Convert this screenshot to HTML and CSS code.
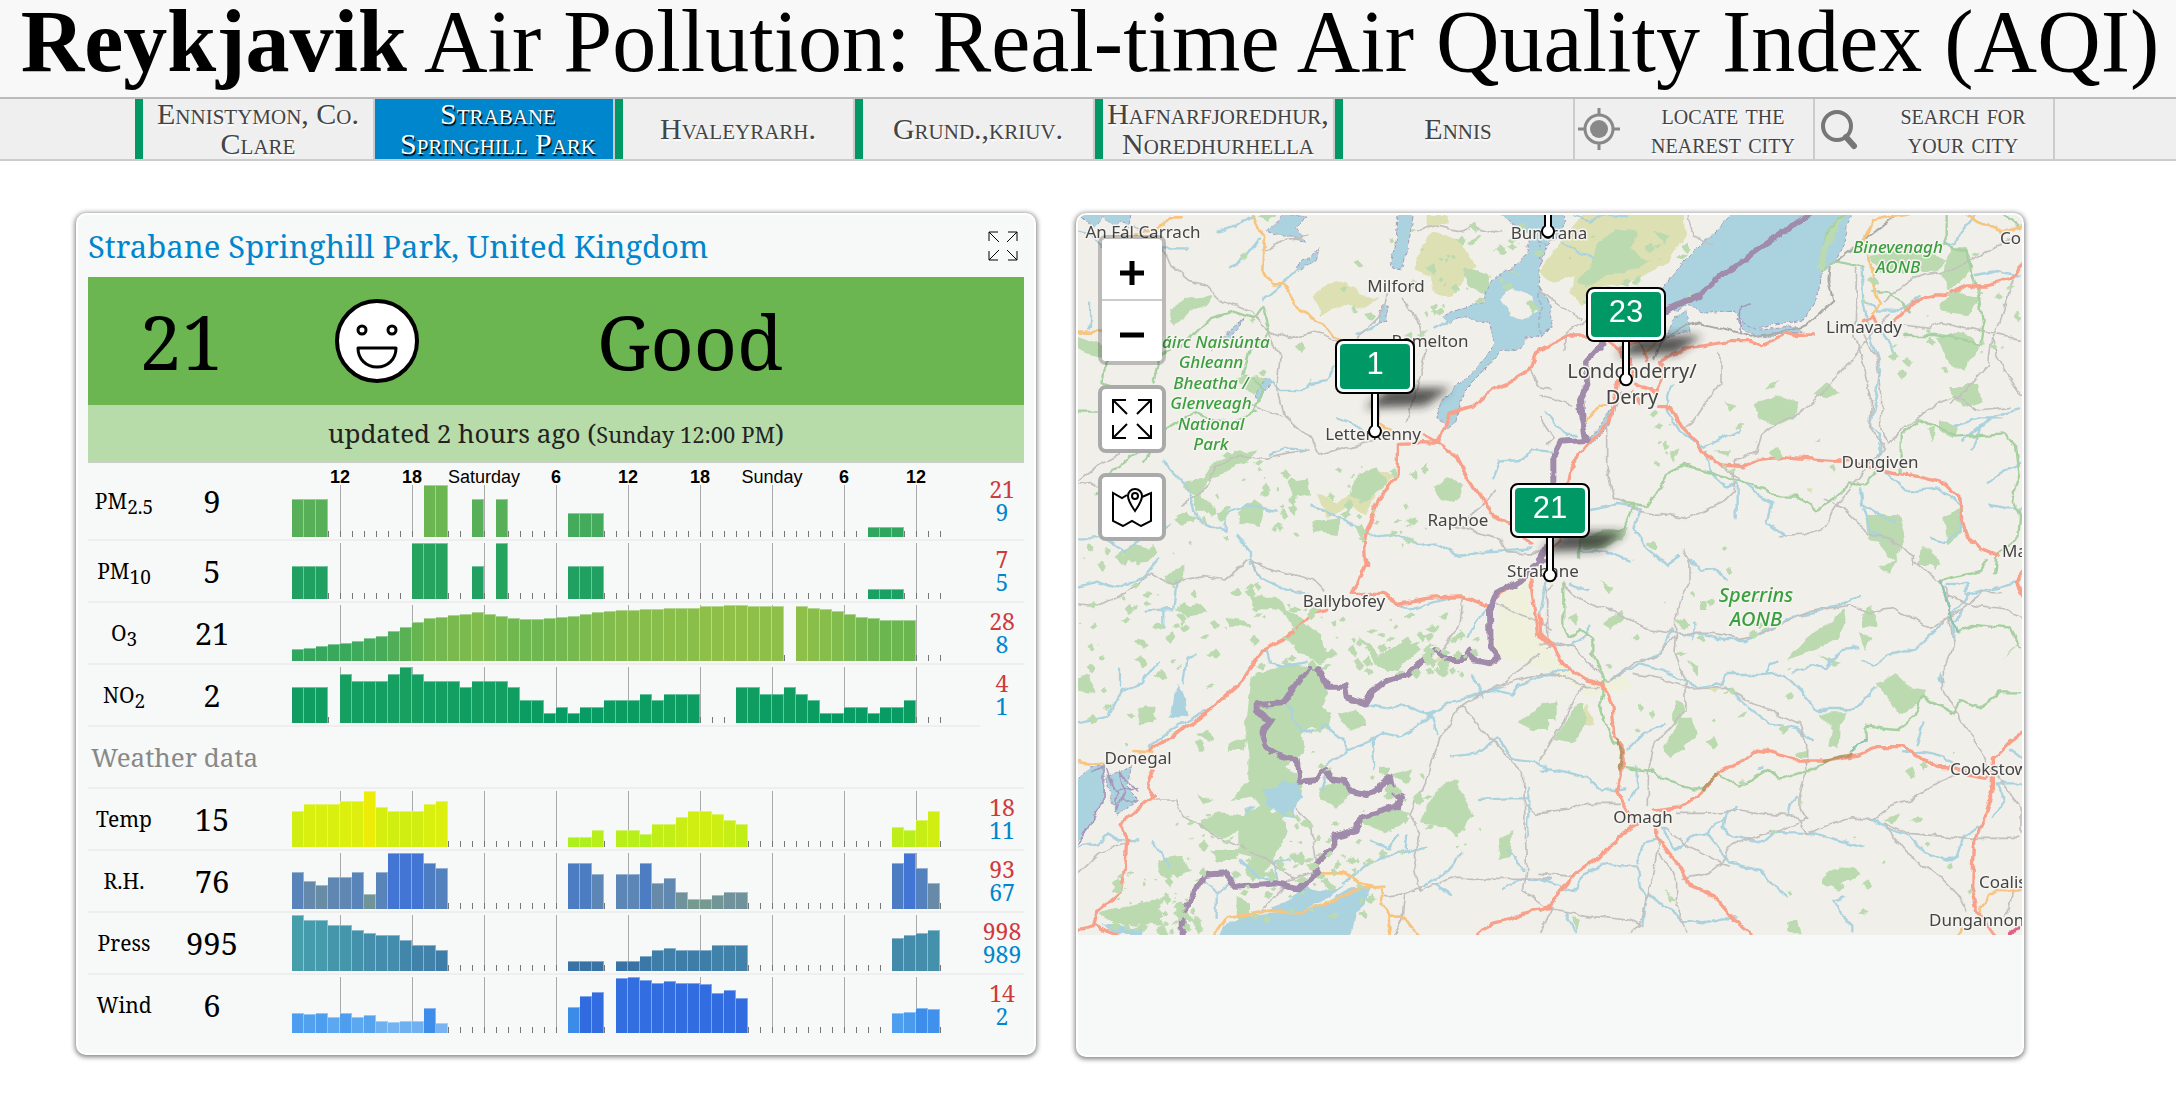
FILE: index.html
```html
<!DOCTYPE html>
<html lang="en">
<head>
<meta charset="utf-8">
<title>Reykjavik Air Pollution: Real-time Air Quality Index (AQI)</title>
<link rel="stylesheet" href="styles.css">
</head>
<body>
<header class="masthead">
  <h1 class="title"><b>Reykjavik</b> Air Pollution: Real-time Air Quality Index (AQI)</h1>
</header>
<nav class="cities">
  <a class="city good" href="#ennistymon">Ennistymon, Co. Clare</a>
  <a class="city active" href="#strabane">Strabane Springhill Park</a>
  <a class="city good" href="#hvaleyrarh">Hvaleyrarh.</a>
  <a class="city good" href="#grund">Grund.,kriuv.</a>
  <a class="city good" href="#hafnarfjoredhur">Hafnarfjoredhur, Noredhurhella</a>
  <a class="city good" href="#ennis">Ennis</a>
  <a class="city tool" href="#locate">
    <svg class="tool-icon" viewBox="0 0 44 44" aria-hidden="true"><circle cx="22" cy="22" r="14" fill="none" stroke="#888" stroke-width="3"/><circle cx="22" cy="22" r="9" fill="#888"/><path d="M22 1v8M22 35v8M1 22h8M35 22h8" stroke="#888" stroke-width="3"/></svg>
    <span>locate the nearest city</span></a>
  <a class="city tool" href="#search">
    <svg class="tool-icon" viewBox="0 0 44 44" aria-hidden="true"><circle cx="20" cy="19" r="14" fill="none" stroke="#777" stroke-width="4"/><path d="M29 30l8 9" stroke="#777" stroke-width="6" stroke-linecap="round"/></svg>
    <span>search for your city</span></a>
</nav>

<main class="panels">
  <section class="card station">
    <div class="station-head">
      <h2 class="station-name"><a href="#strabane">Strabane Springhill Park, United Kingdom</a></h2>
      <button class="expand" type="button" aria-label="Expand"><svg viewBox="0 0 30 30" aria-hidden="true"><path d="M1 10V1h9M1 1l10 10M20 1h9v9M29 1L19 11M1 20v9h9M1 29l10-10M29 20v9h-9M29 29L19 19"/></svg></button>
    </div>
    <div class="level">
      <span class="level-num">21</span>
      <svg class="face" viewBox="0 0 84 84" aria-hidden="true"><circle cx="42" cy="42" r="40" fill="#fff" stroke="#000" stroke-width="4"/><g fill="none" stroke="#000" stroke-width="3"><circle cx="27" cy="31" r="4"/><circle cx="57" cy="31" r="4"/><path d="M23 49h38c0 11-8 19-19 19s-19-8-19-19z" stroke-linejoin="round"/></g></svg>
      <span class="level-word">Good</span>
    </div>
    <p class="updated">updated 2 hours ago (<small>Sunday 12:00 PM</small>)</p>

    <table class="readings air">
      <colgroup><col class="c-name"><col class="c-now"><col class="c-chart"><col class="c-range"></colgroup>
      <tbody id="air"></tbody>
    </table>
    <h3 class="weather-title">Weather data</h3>
    <table class="readings weather">
      <colgroup><col class="c-name"><col class="c-now"><col class="c-chart"><col class="c-range"></colgroup>
      <tbody id="weather"></tbody>
    </table>
  </section>

  <section class="card map-card">
    <div class="map">
      <svg class="map-art" viewBox="0 0 944 720" role="img" aria-label="Map of stations around Strabane">
        <defs>
          <filter id="soft" x="-50%" y="-50%" width="200%" height="200%"><feGaussianBlur stdDeviation="5"/></filter>
          <filter id="rough" filterUnits="userSpaceOnUse" x="-10" y="-10" width="964" height="740" color-interpolation-filters="sRGB">
            <feTurbulence type="fractalNoise" baseFrequency=".06" numOctaves="3" seed="4" result="n"/>
            <feDisplacementMap in="SourceGraphic" in2="n" scale="8" xChannelSelector="R" yChannelSelector="G"/>
          </filter>
          <g id="pin">
            <path d="M-10-24l24-20h62l-26 18z" fill="#222" opacity=".75" filter="url(#soft)"/>
            <path d="M-3-42V-6a6 6 0 1 0 6 0V-42z" fill="#fff" stroke="#000" stroke-width="2"/>
            <rect x="-39" y="-92" width="78" height="53" rx="7" fill="#fff" stroke="#000" stroke-width="2"/>
            <rect x="-35" y="-88" width="70" height="45" rx="4" fill="#096"/>
          </g>
        </defs>
        <rect width="944" height="720" fill="#f1efe9"/>
        <g filter="url(#rough)">

        <!-- north-west sheet -->
        <g transform="translate(-8 -10) scale(.33333)">
          <g class="heath"><path d="M1070 30l60 0 0 25-60 10zM1050 130l40-50 60 15 50 50 20 40-40 40-30 50-60-10-10-50-50-20zM730 280l40-40 60-10 40 40 60 10-60 30-50-10-70 30zM740 860l60 30 60-30 70-60 40 10-50 60-30 60-60-30-60 40z"/></g>
          <g class="wood"><path d="M560 30h60l-30 20zM300 310l60-30 70-10-20 30-60 30-40 30zM20 390l70 20 20 60-40-10-50-30zM500 520l60-10 40 20-50 40zM340 830l60-10 30-50 80-30 50-10-30 40-60 30-60 30-20 50-50-30zM370 870l40 10 20 40-50 0zM650 830l60-10 10 50-50 10zM1090 850l40-30 50 20-10 40-50 10zM860 810l60-20 30 50-60 50-50-10zM720 950l90-10-10 50-70-10zM500 920l50-40 40 30-20 50-60-10zM150 1040l50-20 60 20-20 30-60 5zM1180 190l60 20 40 50-30 10-50-30z"/></g>
          <g class="water">
            <path d="M10 10h179l-10 55-30-20-20 25-30-30-25 25-20-15zM590 80l50-50h65l-25 35 20 45-40-20-40 0zM985 10h48l-15 90-20 90-40-10 20-60zM1260 10h220v70l-70 60-5 100 35 90v50l-80 20-10 30-60 10-60 70-50 50-20 90-30 20-30-30 20-60 100-90 60-80-30-60-70-15-40 20-20-20 50-25 70-20 20-60 60-40 50-40 10-60z"/>
            <path d="M680 185l45-30 25-30-15 40-50 40zM920 360l20-60 15 5-10 50zM490 360l35-20-50 60-50 40zM555 570l35-50 15 10-40 60z"/>
          </g>
          <path class="land" d="M1290 290l40-40 60 20 10 50-30 20-50-10z"/>
          <g class="stream"><path d="M24 80l40 10 30 30M280 130l70 0M440 80l60-15 50-35M480 190l50-40 40-50M580 280l60-50 80-60M60 290v80M740 150l-60 50M600 525l30 30 60 0 30-20 50-10 20-40M600 750l50-20 60 5M730 905l70 30 70 40 60 25 60-10 50 30 60-5 60 35 80-10 140-10M24 1000l80 0 60 40 60-40 80-40M280 770l70 70 30 100 90 40 0-60 60-20 90 20M500 990l40 50v40M1270 820l20-50 60-5 40-30 50 5M800 640l50 20 50 30M860 390l60-30M1090 370l40-20"/></g>
          <g class="lane"><path d="M190 60l70 30 40 90 60 50 50 10 50 50 80 30 60 60 60 20 70-20 80 30M24 830l60-50 60-30 80-60M24 840l40-5 80 50M600 380l30 80-10 90 20 80 80 70 30 50 70-20 90-20M590 140l60-40 60-10M1040 80l40-20 100 20 30-15 80 20M1000 280l50 80 20 80-30 110-30 100M860 400l80-80 20-90M330 900l80-50 30-70 80-30 70 10 130-25M540 600l90 30M1190 940l60-50 20-40M1380 490l20 50 40 10M1120 950l90 30 80 20 20 40 90 5 40-20"/></g>
          <g class="path"><path d="M110 470l-10 60 60 40-40 20M250 530l20-80 80-40 70-70 70-20 60 20 30-40 20 70-10 40-50 20-20 80 30 10 30 40-30 60M220 770l60-90 90-60 60 30 70 0 60-30M24 620h80M80 870l60-80 120-90"/></g>
          <path class="amber" d="M10 380l94 0M140 85l120-5 30-40h45M545 10l5 45 35 40-5 100 25 40 35 0 45 80 50 25 60 50 20 20"/>
          <path class="amber" d="M920 590l10 60 40 30"/>
          <path class="red" d="M1440 420l-45 30-20 50-60 35-50 20-55 50-70 20-20 45-20 45-40-2-75 2 0 90-60 80-40 110 5 90M1060 690l40 22 60 40 30 60 40 60 40 60 20 15 50 20 40 50"/>
        </g>

        <!-- north-east sheet -->
        <g transform="translate(462 -10) scale(.33333)">
          <g class="heath"><path d="M150 10l280 0 5 80-50 80-80 50-120 30-60 50-40-40 20-50-60 20-50-30 60-80zM800 850l20 0-5 15z"/></g>
          <g class="wood"><path d="M170 120l60-50 60 10-20 50 60 40-70 30-60 10-60 40-30-20 40-40zM340 80l50 10-20 30zM645 600l80-30 50 20-10 50-60 20-50-20zM820 570l40-35 40 25-40 20zM675 550l40-25-10 30zM550 590l40 10-20 20zM980 150l140-20 100 40-40 30-150 5zM1230 120l50 10 20 60-70 70-20-50zM1195 300l60-40 70 20-40 50-80-10zM1190 400l80-20 50 50-50 70-50-30zM1225 540l90 0 10 50-60 20zM1200 640l50 20-10 40-40-20zM975 930l100 0 20 60-30 80-40-50-40-20zM1210 940l60-40-5 90-40 30zM1145 1030l30 0 20 50h-60zM395 740l20-10-10 40zM520 740l50-5-5 20zM1165 670l20-5-5 50zM120 1000l90-30 50 0-10 30-60 30-60 0z"/></g>
          <g class="water">
            <path d="M598 10h342l-30 105-25 60-40 20-5 60-50 90-160 30-50-60-80 10-60-25-30 20-50-30 0-30 70-90 50-50z"/>
            <path d="M0 100l20 20-20 60zM0 250l30 50 10 70-40 20zM440 320l10 60-80 20 30-60zM590 345l70 30 110-10 10 15-100 15-60-10z"/>
            <path d="M220 600l-10 60-60 60-15-10 50-50z"/>
          </g>
          <g class="stream"><path d="M100 30l50 20 50-20h60M70 110l40 30 50 15M20 620l60 70 30 0M380 610l40 70 70 45 50-20 60-30M400 540l-20 60M500 740l10 60 50 45 40-20 60 50 40 20-15 60 50 40M590 830v110M965 190l5 100 20 100 30 100-10 90-20 80 30 30-5 90M975 290l40 30 50 0 80-50M1060 440l-30-60-60-10M960 850l10 50 50 30 40 20M970 910l20 60 40 30M1215 120l30-10 30-40 30-40M1310 210l60-15 70 15M1440 610l-70 20-50 40-20 60M1270 710l80-70M1240 660l80-20 60 0M1340 830l60-35 40-15M1040 800l60 60 100-10 60 50v80l-50 30-40-10M150 915l80-15 70 10-20 60 40 60 60 50 40-30M1345 900l60 10 40 0M120 1040l70 0 80 30"/></g>
          <g class="lane"><path d="M0 260l40 30 80 50M0 570l100 30M140 340l-60 40-5 60M440 20l20 70 60 30M240 560l-40 100 0 120 20 100 80 40 140 20 110-50 30-30v-90l70-30 15-50 50-40 60-20 90-80 70-90 110-130M540 440l0 90-80 120-30 20M950 190l-5 200 30 100 20 100-5 80 40 60-130 160-50 80-60 20-70 5M970 385l40 80 15 100 0 100 15 50 60-50 90-70 60-20 60 40 100-10M1090 360l80 10 30-20 90 20 150 30M1420 220l-40 130-25 50-10 80-110 120M1355 400l40 100 50 70M850 880l70 40 60 60 60 20 80 50v30M1030 290l90-70 150-40 110-60 40-20M540 780l60 40M0 640l40 60-20 20"/></g>
          <path class="rail" d="M340 460q20-80 140-105l90 20 60 20 110-15 60-20 80-75-15-60 5-40 220-170"/>
          <g class="path"><path d="M120 1060v-60l130-30 30-70-30-10 70 10 70-100 40-20 80 20 80 25 60 20 70 30 50 0 60 40 50-30 50-50 40 5 50-50-20 20M850 200l40-30 80 15M915 30l-60 60-20 100M1220 20v100l60 20 30 100 20 120-10 60-130-30-100 0M1000 260l50 0 60 60M1085 800v-110l50-45 60 20 50 30 150-10 30 40 10 80-20 60 25 60-5 80-60 30-10 70M1390 30l50 40"/></g>
          <path class="amber" d="M1130 20l-130 25-25 55 5 60 20 30 5 70 15 40-30 40M1270 20l40 30 80 30 70-20M130 650l50-45h20M310 450l50-50"/>
          <path class="red" d="M0 435l80-45 140 0M210 410l60 60 10 50-50 10-20 120-60 60-60 80-10 60M60 1000l-60 60M240 430l60-20 20 60M370 490l-10-20 70-40 140-20 60 0 30 10 80-30 80-4M290 540l60 20 20-60M350 605l45 0 30 60 45 45 15 30 60 40 60 5 50-25 70-5 200 15 100 25 110 20 80 20 45 45 5 60 20 60 40 30 50 20M1060 350l60-60 60-20 50 0 50-30h60l70-20 50-50M970 350l30-15 10 20M280 560l20 30"/>
          <path class="border" d="M830 10l-160 110-120 90-70 60-100 45M190 415l-55 60 10 60-25 50 5 60 15 60-80 5-20 40v80M0 1060l20-40"/>
          <path class="shoal" d="M600 380l2-80 30-10"/>
          <path class="wood" d="M915 32l-60 60-30 100 20 10 20-80z"/>
        </g>

        <!-- south-west sheet -->
        <g transform="translate(-8 345) scale(.33333)">
          <path class="field" d="M1300 90l70-40 20 160 50 60v60l-80-20-90-30 10-80z"/>
          <g class="wood"><path d="M545 350l60-20 60-20 80 20 30 70-30 40 40 20-10 50-50-10-30 30 10 50-60 40 60 40-10 50-60 10-30 30 50 60-30 60-30 50-50 40-20-30 20-40-40-10 0-60 20-60 40-30-20-20-60 10 50-60 0-80-10-60zM690 180l60 40 10 50 40 20-50 20-70-40-30-30zM540 110l80 0 30 40 60 30-30 20-50-50-80-10zM470 170l60 10 20 20-70 0zM390 780l60-20 80 10-10 40-60 20-70-20zM800 460l60-15 30 45-50 25zM420 870l90 0-10 30-60 0zM745 690l70-40 30 40-40 50-60-20zM1050 790l50-110 50-20 40 60 20 50-50 60-30-30zM870 780l100-40 50 20-70 60-60-20zM930 620h30v30l-30-5zM960 650l70-20-20 40zM90 1060l80-20 120-30-30 40 20 50-140-10zM280 40l60-20v50l-50 0zM320 140l60-10 30 30-60 10zM20 350l40-10 10 60-50-10zM200 440l50 0 0 50-40 0zM480 550l50-15-10 40-50 0zM870 230l60 60 70-50 50 30-70 60-60-10zM380 700l50 20-30 10zM1340 490l90-60 10 80-60 0zM1280 840l50-30-10 80-30 10zM500 1010l40 20 0 60-30 20-10-50zM260 900l80-10 20 40-80 20z"/></g>
          <path class="heath" d="M1090 300l25-10 5 30z"/>
          <g class="water"><path d="M10 670l54-50 40 0-5 110-50 80-39 45zM110 650l75-30-15 60 40 40-70 40-20-50z"/></g>
          <g class="lake"><path d="M320 370l25 50 10 40-50 20zM575 685l45-8 20-20 50 15 10 40-20 20-10 45-35-5-20-30-35-10 15-20zM520 745l30-10-20 25zM600 1055l60-40 40-35 50 20 80-25-50 35-60 30-40 20zM440 1150l20-50 60-30 100-10 100-15 60-25 50-30 70-10-10 50-30 30-10 50-30 40zM100 1090l120 15-5 20h-80z"/></g>
          <g class="stream"><path d="M24 80l60-15 50 20 90-35 40-50M540 0l30 50 80 40 60 10M320 60l-10 90-80 5M280 200v-50M24 490l90-20 40-80 60-20 50-60M150 380v-60M340 370l10-80 30-10M240 560l60-50 110-60M590 270l10 40 40 10 70-15M650 440l50 80 70-20 60 50v30l-70 40M830 570l80-30 30-20 50 10 40-20 50-50 70-35 60-15 40-15 50-15M890 435l60 10 60-10 70 30 20 60M1210 350l30 60M1240 400l40-10 50 15 20-30 90-40M1140 590l80-10 60-45 50 60 70 10 30 20M905 540l5 90M770 640l-15 50M1230 720l80-5 60 0M1375 680v150M960 120l60 25 120-30M1250 150l-40 40-15 40M24 860l60-10 30-30 30 20 60 5M400 970l40 30 0 80M440 1000l60-50M510 900l50 50 60 15-10-60 50-10M820 970l60-50 50-30 60-10 80-20M900 845l60 20 30-40M1010 870l5-50M1060 980l80-50 40-50M1090 975l50 30M1310 870l50 60M1300 990l60-35 80 5M300 920l-50-70"/></g>
          <g class="lane"><path d="M24 135l60 5 80-40 80-60 60 30 100-20 60 10 70-60 80 30 120 30 30 30M24 940l60-60 80-30M250 720h70l20 50 80 50 120 50 50 30 80 60M680 745l40 40 20 150-90 30-70 90M1180 110l-10 80-50 80M1280 130l110 50 50 30M1290 375l150-115M1180 435l110-60 150-40M1180 435l60 80 120 120 10 300-10 60 70 50M1180 435l-70 100-40 120-50 110 30 60-20 60 20 110 90-40 300 0M1370 740l30 20 40-5M940 1010l70-10 45-20M1005 1000l-10 80-20 40M1430 80v50M540 0l20 40"/></g>
          <path class="amber" d="M10 605l94 10M190 570l60 5M740 940l80 0 60 35 50 10 5 40 30 80-10 40M960 1070l40 0 60 75M420 1145l50-70 120-20 90 5 110-40 90-35 60-5"/>
          <path class="red" d="M890 0l-20 50-30 50 100 0 40 30 90-15 110-5 80 30 10-20 110-80M770 150l-40 10-90 80-60 30-70 100-100 90-80 50-90 60M250 630l-20 50 20 30-100 80 20 50-5 80-15 80-70 60-10 40-60 15M80 1095l80 45M1385 60l20 160 35 35M1440 1045l-60 10-60 20-60 15-55 50"/>
          <path class="border" d="M1420 0L1350 60 1280 100 1260 150 1262 260 1285 290 1260 310 1210 300 1200 275 1185 300 1130 300 1095 270 1010 345 950 360 905 395 885 430 830 410 825 380 775 380 750 325 720 322 680 370 640 430 560 435 560 455 605 480 575 520 585 555 610 580 680 600 690 665 740 660 760 625 785 655 820 660 840 695 890 705 960 655 970 700 990 710 980 740 880 770 860 810 790 830 790 865 730 915 745 940 690 985 620 970 500 980 465 940 400 945 375 1000 335 1060 335 1160"/>
          <g class="shoal"><path d="M24 850l25-45 50-80v-100l-30 10M110 630l30 80-5 40 30-50-20-60 30 30 30 20M200 680l-60 20M150 720l60 0"/></g>
        </g>

        <!-- south-east sheet -->
        <g transform="translate(462 345) scale(.33333)">
          <path class="field" d="M0 250l120 120 140-20 20 30-140 30-60-50-80-30z"/>
          <path class="heath" d="M125 490l15-65 20 70zM490 380l40 5-10 20z"/>
          <g class="wood"><path d="M740 300l60-70 80-50 30-35 10 40-30 50-80 40zM965 165l30-30 20 70-45-5zM1010 370l60-30 40 40 45 10-10 40-70 30-40-60zM390 470l15-50 25 10v40l-30 30zM365 570l60-100 30 0 20 50-40 30 0 20-50 20zM840 460l80 0-20 40-5 60-30 0 10-60zM845 970l10-35 80-20 30 25-40 20-60 20zM745 1080l30 0 10 40-40 0zM40 540l60-100 30-10 10 60-40 60zM10 440l40-20 0 60-30 0zM80 170l30-10 0 40zM480 120l20 0 0 30-20 0zM180 60l40 20-10 20zM190 190l50-40 10 20-40 40zM1030 780l50-20-20 30zM1010 20l60-20-20 40zM760 580l40-15v25h-35zM440 300l40 20-5 30zM840 285l60 20-20 10zM955 220l40 10-20 40zM1380 300l60-50-20 10zM1155 0h30l0 30zM370 990l40 30-20 5zM100 1070l20 10-10 35z"/></g>
          <g class="lake"><path d="M1200 345l15 20-5 10-15-10zM655 620h15v10h-15z"/></g>
          <g class="stream"><path d="M450 0l40 35 30-5 40 30M0 340l80-10M20 240l60 20 60-30 5-30M310 300l60-30 30-60M210 360l90-50 70 20 60 30 40 25 70-10 20-30 100 0 70-5 50 50 50 60 100 0 60-40 20-30M680 345l10-30 20-10M460 235l0-50M400 220l90 5 60 15 70 0 80-40 60-30 60-10 100-35 40-20M550 380l60 50 80 60 80 15 50 40M755 335l60-20 40 10 50-55 50-5M970 300l30 20 40-30 90-25 100-100 60-60 100-30 50-10M1220 75h60l0 30M1240 250l0-60 30-40M1090 580l60-5 60 15 30 20M1150 490l-20 60M1440 590l-30-20M1440 670l-70 0 20 50-30 50M1310 800l-40 30-20 60-30 15-70-30-50-50-60-20-60-30M970 860l-150-40-110-5-40 35-100-20-20-30 10-40 30-20M740 770l5-30 30-30M555 770l-60 50-40 10-50 40-40-70M500 820l70 90 90 20 30 40 50 40M0 630l30-5 110 25 50 45 60-10M290 620l0 60-20 40M260 570l50-50 60-25M0 960l100 30 40-50 40-30 110 10 10 60 20 20-10 100M80 1060l30 60M330 1000l60 50 40 30 60 10 50-15 50 0M290 910l20-60 50-10M910 1010l-30 10 20 40 40 40 0 20M0 160l20-100M90 70l50 20"/></g>
          <g class="lane"><path d="M20 240V100l20-30M0 250l100 10 60 60 40 50 80-60 80-30 50-50 0-80 40-80v-60l-20-40M70 70l50 50 90 30 120 60 80 10 110 0 80 15 60-10 100-50 50-20 120-20 60 20 80-10 100 60 100-60 60-50 50 0M0 340h40l100 40h40M410 220l-5 60 30 80 0 90-90 100-20 80 0 100M280 340l80 15 100 35 90-5 60 30 170 80 20 60v80l-20 80 0 30 20 30-90 40-70 20-80 30-10 40-40 30-80 20M0 760l90-10 50-20 100 0M180 380l-60 0-60 120-60 100M410 760h80l110-10 60 10 110 10 30 50 140-50 60 10 50-40 60-20 100-60 70-40M1030 790l70 30 200 15h140M1030 790l60 80 110 80 60 60 20 40M1120 0l60 50 40 40 20 170-30 70 0 60 60 100 40 60 30 60 40 50 60 80 0 70 70 70M1210 100l100 40 90 10 40 20M370 800l80 60 60 30 60 30M360 840l-20 110-40 150-30 20M360 880l50 90 0 60 30 80M0 1120l30-70 130 20 110 10 40 20M0 940l100 10M1420 990l-10 60-20 20"/></g>
          <g class="path"><path d="M70 70l0 120 20 40 30-20 40 30 0 40 30 80 0 50-10 30 40 110 30 5M240 620l100 10 30 30 90 25 30 0M530 640l70 40 80-50 40 30 60-30 50 0 30-30M980 500l90 10 60-50 20-50 90 50 20-40 60 20 60-40 60 0M1200 60l120-30 20-30M1250 215l50-20 50 5 60 5 30 60M980 540v-40"/></g>
          <path class="path trail" d="M930 575l50-40M1200 60l50 155"/>
          <path class="amber" d="M1320 1060l20-60 120-15M1250 1125l20-20"/>
          <path class="red" d="M0 160l5 60 30 30 30 60 70 50 50 10 30 60 10 100 20 20 5 60-20 80 20 40 30 50M340 750l80-10 60-35 60-70 50-25 50-40 50 5 80 25 90 0 90-15 60-25 80 0 100 60 40 0 60 20M1280 645l60 10 20-20 0-40 50-50 50-40M1360 650l0 40-60 170-5 120 20 80 50 70M290 795l-50 30-50 60-90 60-70 90-30 20M350 800l0 30 70 90 30 50 70 40 60 70 60 45M1460 30l-30 40 30 60"/>
          <path class="brown" d="M235 540l10 40-5 50M490 690l40-45M850 600l80-15"/>
          <path d="M1440 1105q-25 5-35 20" fill="none" stroke="#e0608a" stroke-width="10"/>
        </g>
        <g id="speckle" class="wood"></g>
        </g>

        <g class="towns">
          <text x="65" y="23">An Fál Carrach</text><text x="318" y="77">Milford</text><text x="352" y="132">Ramelton</text>
          <text x="295" y="225">Letterkenny</text><text x="380" y="311">Raphoe</text><text x="471" y="24">Buncrana</text>
          <text x="786" y="118">Limavady</text><text x="802" y="253">Dungiven</text><text x="266" y="392">Ballybofey</text>
          <text x="465" y="362">Strabane</text><text x="60" y="549">Donegal</text><text x="565" y="608">Omagh</text>
          <text class="from" x="922" y="29">Coleraine</text><text class="from" x="924" y="342">Maghera</text>
          <text class="from" x="872" y="560">Cookstown</text><text class="from" x="901" y="673">Coalisland</text><text class="from" x="851" y="711">Dungannon</text>
          <text class="big" x="554" y="163">Londonderry/</text><text class="big" x="554" y="189">Derry</text>
        </g>
        <g class="parks">
          <text x="133" y="133">Páirc Naisiúnta</text><text x="133" y="153">Ghleann</text><text x="133" y="174">Bheatha /</text>
          <text x="133" y="194">Glenveagh</text><text x="133" y="215">National</text><text x="133" y="235">Park</text>
          <text x="820" y="38">Binevenagh</text><text x="820" y="58">AONB</text>
          <text class="big" x="678" y="387">Sperrins</text><text class="big" x="678" y="411">AONB</text>
        </g>
        <g class="pins">
          <use href="#pin" x="470" y="17"/>
          <use href="#pin" x="297" y="217"/><text x="297" y="159">1</text>
          <use href="#pin" x="548" y="165"/><text x="548" y="107">23</text>
          <use href="#pin" x="472" y="361"/><text x="472" y="303">21</text>
        </g>
      </svg>
      <div class="controls">
        <div class="zoom">
          <button type="button" aria-label="Zoom in"><svg viewBox="0 0 26 26" aria-hidden="true"><path d="M13 1v24M1 13h24"/></svg></button>
          <button type="button" aria-label="Zoom out"><svg viewBox="0 0 26 26" aria-hidden="true"><path d="M1 13h24"/></svg></button>
        </div>
        <button class="square" type="button" aria-label="Full screen"><svg viewBox="0 0 40 40" aria-hidden="true"><path d="M1 14V1h13M1 1l14 14M26 1h13v13M39 1L25 15M1 26v13h13M1 39l14-14M39 26v13H26M39 39L25 25"/></svg></button>
        <button class="square" type="button" aria-label="Stations"><svg viewBox="0 0 40 40" aria-hidden="true"><path d="M15 8L10 11 1 6v28l10 5 9-5 9 5 10-5V6l-9 4M23 24c-4-6-7-10-7-15a7 7 0 0 1 14 0c0 5-3 9-7 15z"/><circle cx="23" cy="9" r="3"/></svg></button>
      </div>
    </div>
  </section>
</main>
<script src="charts.js"></script>
</body>
</html>
```
FILE: styles.css
```css
* { box-sizing: border-box; }
body { margin: 0; background: #fff; color: #000; font-family: "Liberation Serif", "Times New Roman", serif; }
button { font: inherit; cursor: pointer; }

.masthead { padding-left: 4px; background: #f8f8f8; border-bottom: 2px solid #bbb; text-align: center; }
.title { margin: 0; height: 97px; font-size: 88px; line-height: 84px; font-weight: 400; white-space: nowrap; }

.cities { display: flex; justify-content: center; padding-left: 14px; background: #efefef; border-bottom: 2px solid #ccc; }
.city { display: flex; align-items: center; justify-content: center; flex: 0 0 240px; height: 60px; border-right: 2px solid #ccc; color: #444; font-size: 30px; line-height: 30px; font-variant: small-caps; text-align: center; text-decoration: none; text-shadow: 1px 2px 1px #fff; }
.good { border-left: 8px solid #096; }
.active { padding-left: 8px; background: #0086cc; color: #fff; text-shadow: 1px 2px 1px #000; }
.tool { justify-content: flex-start; padding-left: 2px; font-size: 29px; line-height: 29px; }
.tool span { flex: 1; padding: 0 12px 0 24px; }
.tool-icon { width: 44px; height: 44px; flex: none; }

.panels { display: grid; grid-template-columns: minmax(0, 960fr) minmax(0, 948fr); gap: 40px; align-items: start; padding: 52px 152px 36px 76px; }
.card { background: #f7f9f9; border: 2px solid #fff; border-radius: 10px; box-shadow: 0 1px 5px 1px rgba(0, 0, 0, .5); }

.station { padding: 0 10px 16px; font-family: "Noto Serif", "Droid Serif", "DejaVu Serif", serif; }
.station-head { display: flex; justify-content: space-between; align-items: center; height: 62px; padding-right: 6px; }
.station-name { margin: 0; font-size: 31px; line-height: 40px; font-weight: 400; }
.station-name a { color: #0086cc; text-decoration: none; }
.expand { width: 30px; height: 30px; padding: 0; border: 0; background: none; }
.expand svg, .square svg { display: block; width: 100%; height: 100%; fill: none; stroke: #000; stroke-width: 1; }

.level { display: grid; grid-template-columns: 187fr 204fr 422fr 123fr; align-items: center; justify-items: center; height: 128px; background: #6bb650; line-height: 128px; }
.level-num, .level-word { font-size: 75px; }
.face { width: 84px; height: 84px; }
.updated { margin: 0; height: 58px; background: #b7dba9; border-bottom: 2px solid #ccc; color: #222; text-align: center; font-size: 26px; line-height: 56px; }
.updated small { font-size: 22px; line-height: 1; }

.readings { width: 100%; table-layout: fixed; border-collapse: separate; border-spacing: 0; }
.c-name { width: 72px; }
.c-now { width: 104px; }
.c-range { width: 44px; }
.readings th, .readings td { padding: 0; border-bottom: 2px solid #eee; font-weight: 400; text-align: center; height: 62px; }
.readings th { font-size: 21px; }
.readings sub { font-size: 19px; line-height: 0; vertical-align: -5px; }
.readings .now { font-size: 31px; line-height: 50px; }
.readings .chart { padding: 2px 0 2px 28px; text-align: left; }
.chart svg { display: block; overflow: visible; }
.chart text { font: 18px "Liberation Sans", Arial, sans-serif; text-anchor: middle; }
.chart .hour { font-weight: 700; }
.range span { display: block; font-size: 23px; line-height: 23px; margin: 0 -8px; }
.max { color: #cf3a3a; }
.min { color: #0086cc; }
.air tr:last-child .range { border-bottom-color: transparent; }
.weather-title { margin: 0; height: 62px; padding-left: 3px; border-bottom: 2px solid #eee; font-size: 26px; line-height: 60px; font-weight: 400; color: #888; }
.weather tr:last-child > * { border-bottom-color: transparent; }

.map-card { min-height: 844px; }
.map { position: relative; overflow: hidden; border-radius: 8px 8px 0 0; }
.map-art { display: block; width: 100%; }
.wood { fill: #bbdab0; }
.heath { fill: #dde0b3; }
.field { fill: #f0f1dd; }
.water { fill: #aad3df; stroke: #a79cb8; stroke-width: 3; stroke-dasharray: 12 6; }
.lake { fill: #aad3df; }
.land { fill: #f1efe9; }
.stream, .lane, .path, .amber, .red, .border, .rail, .brown, .shoal { fill: none; stroke-linejoin: round; stroke-linecap: round; }
.stream { stroke: #aad3df; stroke-width: 7; }
.lane { stroke: #c2c0be; stroke-width: 5; }
.path { stroke: #a6d0a0; stroke-width: 7; }
.trail { stroke: #8bc4b0; }
.amber { stroke: #f7c580; stroke-width: 8; }
.red { stroke: #f9a08a; stroke-width: 10; }
.brown { stroke: #b99868; stroke-width: 9; }
.rail { stroke: #a9a9a8; stroke-width: 6; }
.border { stroke: #a18bab; stroke-width: 18; }
.shoal { stroke: #a794b8; stroke-width: 5; stroke-dasharray: 10 5; }
.towns text, .parks text { font-family: "Noto Sans", sans-serif; font-size: 17px; text-anchor: middle; fill: #444; stroke: #f6f4f0; stroke-width: 3px; paint-order: stroke; stroke-linejoin: round; }
.towns .from { text-anchor: start; }
.towns .big { font-size: 20px; }
.parks text { fill: #3c9f3f; font-style: italic; font-weight: 500; }
.parks .big { font-size: 20px; }
.pins text { font: 31px "Liberation Sans", Arial, sans-serif; text-anchor: middle; fill: #fff; }

.controls { position: absolute; left: 20px; top: 20px; display: flex; flex-direction: column; gap: 20px; }
.zoom { display: flex; flex-direction: column; width: 68px; border: 4px solid rgba(0, 0, 0, .22); border-radius: 8px; }
.zoom button { display: flex; align-items: center; justify-content: center; height: 62px; padding: 8px 0 0; border: 0; border-bottom: 2px solid #ccc; background: #fff; border-radius: 4px 4px 0 0; }
.zoom button:last-child { height: 60px; border-bottom: 0; border-radius: 0 0 4px 4px; }
.zoom svg { width: 26px; height: 26px; stroke: #000; stroke-width: 5; }
.square { width: 68px; height: 68px; padding: 10px; border: 4px solid #aaa; border-radius: 8px; background: #fff; }
.square svg { stroke-width: 2; }
```
FILE: charts.js
```js
const HOUR = 12, HOURS = 54, GRID = [4, 10, 16, 22, 28, 34, 40, 46, 52];
const LABELS = ['12', '18', 'Saturday', '6', '12', '18', 'Sunday', '6', '12'];
const g = n => Array(n).fill(0);

// Bar heights hour by hour; 0 is a missing reading. Ramps are [height, r, g, b] stops.
const air = [
  { name: 'PM<sub>2.5</sub>', now: 9, max: 21, min: 9, labels: true,
    ramp: [[10, 47, 166, 94], [24, 68, 171, 92], [38, 87, 176, 87], [52, 108, 182, 81]],
    data: [38, 38, 38, ...g(8), 52, 52, 0, 0, 38, 0, 38, ...g(5), 24, 24, 24, ...g(22), 10, 10, 10] },
  { name: 'PM<sub>10</sub>', now: 5, max: 7, min: 5,
    ramp: [[10, 26, 160, 98], [33, 32, 160, 97], [56, 38, 163, 95]],
    data: [33, 33, 33, ...g(7), 56, 56, 56, 0, 0, 33, 0, 56, ...g(5), 33, 33, 33, ...g(22), 10, 10, 10] },
  { name: 'O<sub>3</sub>', now: 21, max: 28, min: 8,
    ramp: [[12, 49, 166, 94], [30, 79, 174, 87], [41, 108, 182, 80], [49, 128, 187, 77], [56, 144, 192, 72]],
    data: [12, 13, 15, 17, 18, 20, 23, 25, 30, 34, 39, 43, 44, 46, 47, 49, 47, 45, 43, 42, 42, 43, 44, 45, 47, 49, 50, 51, 51, 52, 52, 53, 53, 53, 55, 55, 56, 56, 55, 55, 55, 0, 55, 53, 52, 50, 47, 44, 43, 41, 41, 41] },
  { name: 'NO<sub>2</sub>', now: 2, max: 4, min: 1,
    ramp: [[10, 6, 154, 99], [56, 24, 160, 97]],
    data: [36, 36, 36, 0, 49, 42, 42, 42, 49, 56, 49, 42, 42, 42, 36, 42, 42, 42, 36, 23, 23, 10, 16, 10, 16, 16, 23, 23, 23, 29, 23, 29, 29, 29, 0, 0, 0, 36, 36, 29, 29, 36, 29, 23, 10, 10, 16, 16, 10, 16, 16, 23] }
];
const weather = [
  { name: 'Temp', now: 15, max: 18, min: 11,
    ramp: [[10, 173, 240, 30], [23, 194, 238, 24], [36, 208, 238, 18], [46, 221, 239, 14], [56, 237, 236, 8]],
    data: [36, 43, 43, 43, 46, 46, 56, 40, 36, 36, 36, 43, 46, ...g(10), 10, 10, 17, 0, 17, 17, 13, 23, 23, 30, 36, 36, 33, 27, 23, ...g(12), 20, 17, 27, 36] },
  { name: 'R.H.', now: 76, max: 93, min: 67,
    ramp: [[10, 118, 153, 144], [26, 102, 138, 168], [36, 90, 133, 184], [46, 76, 125, 195], [56, 66, 117, 212]],
    data: [37, 28, 24, 32, 32, 37, 15, 37, 56, 56, 56, 46, 41, ...g(10), 46, 46, 35, 0, 35, 35, 46, 26, 31, 17, 10, 10, 14, 17, 17, ...g(12), 46, 56, 41, 26] },
  { name: 'Press', now: 995, max: 998, min: 989,
    ramp: [[10, 57, 115, 166], [21, 63, 125, 169], [38, 68, 142, 171], [56, 70, 158, 171]],
    data: [56, 51, 51, 46, 46, 41, 38, 36, 36, 31, 26, 26, 21, ...g(10), 10, 10, 10, 0, 10, 10, 15, 21, 23, 21, 21, 21, 26, 26, 26, ...g(12), 33, 36, 38, 41] },
  { name: 'Wind', now: 6, max: 14, min: 2,
    ramp: [[10, 121, 180, 242], [16, 92, 168, 240], [20, 77, 158, 238], [25, 60, 142, 234], [35, 48, 108, 224], [56, 50, 110, 224]],
    data: [20, 19, 20, 16, 20, 16, 18, 12, 11, 12, 12, 25, 10, ...g(10), 26, 37, 41, 0, 55, 56, 53, 50, 52, 50, 50, 49, 40, 43, 35, ...g(12), 20, 21, 25, 24] }
];

function shade(ramp, h) {
  let i = 1;
  while (i < ramp.length - 1 && h > ramp[i][0]) i++;
  const a = ramp[i - 1], b = ramp[i], t = Math.min(1, Math.max(0, (h - a[0]) / (b[0] - a[0])));
  return 'rgb(' + [1, 2, 3].map(k => Math.round(a[k] + (b[k] - a[k]) * t)) + ')';
}

function chart(s) {
  const top = s.labels ? 20 : 0, plot = s.labels ? 52 : 56, base = top + plot;
  let out = '';
  GRID.forEach((h, i) => {
    out += `<rect x="${h * HOUR}" y="${top}" width="1" height="${plot}" fill="#aaa"/>`;
    if (s.labels) out += `<text x="${h * HOUR}" y="18" class="${/\d/.test(LABELS[i]) ? 'hour' : 'day'}">${LABELS[i]}</text>`;
  });
  for (let h = 0; h <= HOURS; h++) {
    const v = s.data[h], x = h * HOUR;
    if (v) {
      const c = shade(s.ramp, v);
      out += `<rect x="${x}" y="${base - v}" width="12" height="${v}" fill="#f7f9f9"/><rect x="${x}" y="${base - v}" width="12" height="${v}" fill="${c}" opacity=".6"/><rect x="${x}" y="${base - v + 1}" width="11" height="${v - 1}" fill="${c}"/>`;
    } else {
      out += `<rect x="${x}" y="${base - 6}" width="1" height="6" fill="#777"/>`;
    }
  }
  return `<svg width="649" height="${base}" viewBox="0 0 649 ${base}">${out}</svg>`;
}

function fill(id, list) {
  document.getElementById(id).innerHTML = list.map(s =>
    `<tr><th scope="row">${s.name}</th><td class="now">${s.now}</td><td class="chart">${chart(s)}</td>` +
    `<td class="range"><span class="max">${s.max}</span><span class="min">${s.min}</span></td></tr>`).join('');
}
fill('air', air);
fill('weather', weather);

// Small woods scattered over the hills: [x, y, width, height, count]
let seed = 7;
const rnd = () => (seed = (seed * 16807) % 2147483647) / 2147483647;
const woods = [[0, 370, 190, 60, 34], [5, 420, 130, 110, 26], [200, 390, 180, 70, 60], [280, 410, 120, 50, 40], [90, 600, 190, 60, 60], [30, 660, 90, 58, 60], [160, 640, 130, 70, 34], [250, 250, 100, 80, 30], [330, 10, 140, 90, 40], [100, 240, 120, 90, 34], [0, 300, 120, 50, 20], [520, 330, 200, 200, 26], [780, 40, 160, 120, 26], [560, 200, 200, 60, 14], [170, 450, 80, 110, 20], [490, 20, 120, 80, 20], [280, 560, 120, 80, 30], [140, 20, 200, 160, 16], [600, 480, 300, 220, 18]];
document.getElementById('speckle').innerHTML = woods.map(([x, y, w, h, n]) => {
  let d = '';
  for (let i = 0; i < n; i++) {
    const s = 1 + rnd() * 4;
    d += `M${(x + rnd() * w).toFixed(1)} ${(y + rnd() * h).toFixed(1)}l${(s * 1.4).toFixed(1)}-${s.toFixed(1)} ${s.toFixed(1)} ${(s * rnd() * 2).toFixed(1)}-${s.toFixed(1)} ${s.toFixed(1)}z`;
  }
  return `<path d="${d}"/>`;
}).join('');
```
